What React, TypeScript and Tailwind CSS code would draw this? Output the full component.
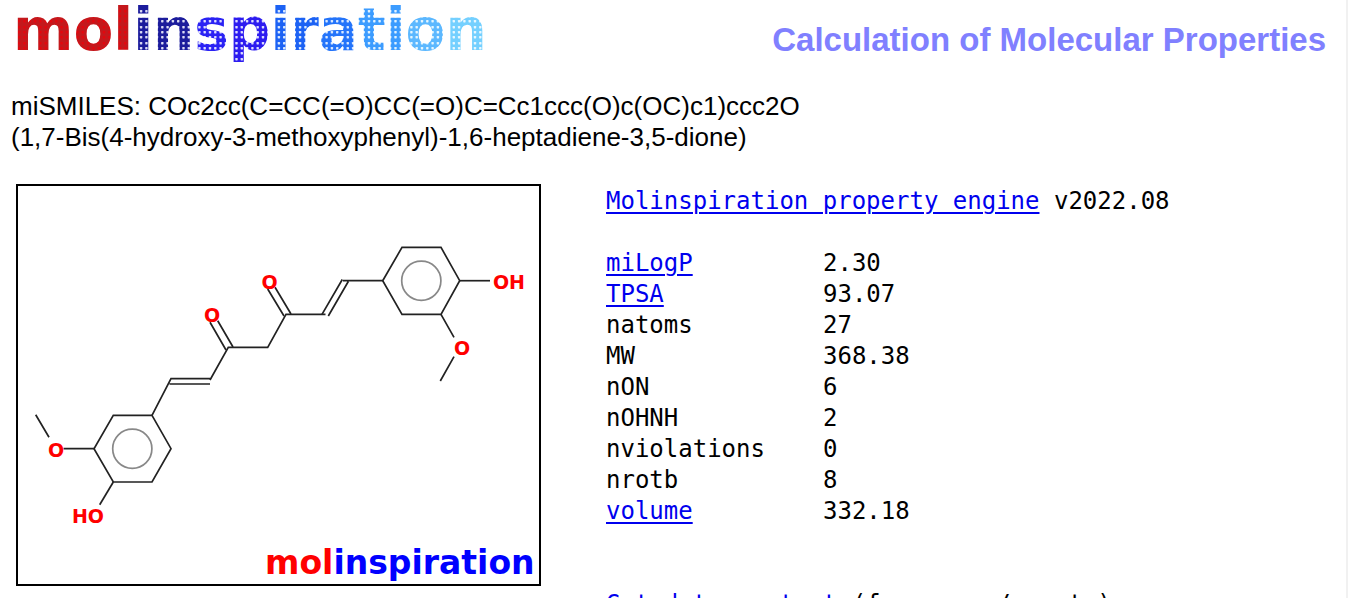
type Property = {
  name: string
  value: string
  href?: string
}

const PROPERTIES: Property[] = [
  { name: "miLogP", value: "2.30", href: "#logp" },
  { name: "TPSA", value: "93.07", href: "#tpsa" },
  { name: "natoms", value: "27" },
  { name: "MW", value: "368.38" },
  { name: "nON", value: "6" },
  { name: "nOHNH", value: "2" },
  { name: "nviolations", value: "0" },
  { name: "nrotb", value: "8" },
  { name: "volume", value: "332.18", href: "#volume" },
]

const LINK = "text-[#0000ee] underline decoration-2 underline-offset-3"

// Colour bands of the header wordmark, left to right
const LOGO_BANDS = [
  { x: 0, width: 116, color: "#c4181c", dot: "#e4060e" },
  { x: 116, width: 60, color: "#1c1c9c", dot: "#dcdcf4" },
  { x: 176, width: 38, color: "#2a22f4", dot: "#dcdcff" },
  { x: 214, width: 41, color: "#2d1cf0", dot: "#dcdcff" },
  { x: 255, width: 47, color: "#1c62f4", dot: "#d8e8ff" },
  { x: 302, width: 39, color: "#2474fa", dot: "#d8e8ff" },
  { x: 341, width: 47, color: "#3c9cff", dot: "#e0f2ff" },
  { x: 388, width: 42, color: "#5cb8ff", dot: "#e4f6ff" },
  { x: 430, width: 50, color: "#74d0ff", dot: "#e8f8ff" },
]

const DOT_ROWS = [2, 7, 12, 18, 23, 28, 34, 39, 44, 50]
const DOT_COLUMNS = Array.from({ length: 90 }, (_, i) => 2 + i * 5.3)

function bandAt(x: number) {
  return LOGO_BANDS.find((band) => x < band.x + band.width) ?? LOGO_BANDS[0]
}

function Logo() {
  return (
    <svg
      viewBox="0 0 471 52"
      className="h-[52px] w-[471px] overflow-visible font-['DejaVu_Sans'] text-[58px] font-bold"
      role="img"
      aria-label="molinspiration"
    >
      <defs>
        {/* Starts left of the origin so the first letter is not cut */}
        <pattern id="dotted" width="490" height="64" x="-4" patternUnits="userSpaceOnUse">
          <g transform="translate(4 0)">
            <rect x="-4" width="4" height="64" fill={LOGO_BANDS[0].color} />
            {LOGO_BANDS.map((band) => (
              <rect key={band.x} x={band.x} width={band.width} height="64" fill={band.color} />
            ))}
            {DOT_ROWS.map((y) =>
              DOT_COLUMNS.map((x) => (
                <rect key={`${x}-${y}`} x={x} y={y} width="2.4" height="2.4" rx="0.6" fill={bandAt(x).dot} />
              )),
            )}
          </g>
        </pattern>
      </defs>
      <text x="-3" y="42" fill="url(#dotted)">
        molinspiration
      </text>
    </svg>
  )
}

function Molecule() {
  return (
    <svg
      viewBox="18 186 521 398"
      className="h-[402px] w-[525px] shrink-0 border-2 border-black font-['DejaVu_Sans'] text-[19px] font-bold"
      role="img"
      aria-label="Curcumin structure"
    >
      <g fill="none" stroke="#222" strokeWidth="1.7">
        {/* Right ring */}
        <path d="M382.7 280.7 402 247.4H441L459.7 280.7 441 314.4H402Z" />
        <path d="M459.7 280.7H490" />
        <path d="M441 314.4 454 337.3M454 356.7 440.3 381" />

        {/* Chain */}
        <path d="M382.7 280.7H343M342.3 279.5 322 314.4M348.3 281.5 328.3 316" />
        <path d="M325.5 314.4H286L267.7 347.4H228.3L210 380" />
        <path d="M267.7 289 284 316M275 287.3 291 314" />
        <path d="M210 322.3 226 350M217.7 320.7 233 347" />
        <path d="M210 378.7H171L152 415.4M169.5 384H210" />

        {/* Left ring */}
        <path d="M152 415.4 171 448.7 152 482H113.3L94 448.7 113.3 415.4Z" />
        <path d="M94 448.7H63.5M49 437.3 35.7 414.7" />
        <path d="M113.3 482 99.7 504.7" />
      </g>
      <g fill="none" stroke="#888" strokeWidth="1.7">
        <circle cx="421.3" cy="280.7" r="19.6" />
        <circle cx="132.3" cy="448.7" r="19.6" />
      </g>
      <g fill="#ff0000" textAnchor="middle">
        <text x="269.5" y="289">O</text>
        <text x="212" y="322">O</text>
        <text x="509" y="289">OH</text>
        <text x="462" y="355">O</text>
        <text x="56" y="457">O</text>
        <text x="88" y="523">HO</text>
      </g>
      <text x="265" y="574" className="text-[33px]">
        <tspan fill="#ff0000">mol</tspan>
        <tspan fill="#0000ff">inspiration</tspan>
      </text>
    </svg>
  )
}

export default function App() {
  return (
    <div className="min-h-screen overflow-hidden border-r-2 border-[#f1f1f1] bg-white font-['Liberation_Sans',Arial,sans-serif] text-black">
      <header className="flex items-start justify-between pt-2 pr-5 pl-4">
        <Logo />
        <h1 className="pt-3 text-[33px] leading-10 font-bold text-[#8080ff]">
          Calculation of Molecular Properties
        </h1>
      </header>

      <p className="mt-[31px] px-[11px] text-[26px] leading-[31px]">
        miSMILES: COc2cc(C=CC(=O)CC(=O)C=Cc1ccc(O)c(OC)c1)ccc2O
        <br />
        (1,7-Bis(4-hydroxy-3-methoxyphenyl)-1,6-heptadiene-3,5-dione)
      </p>

      <main className="mt-[31px] flex items-start gap-[65px] px-4">
        <Molecule />
        <div className="pt-0.5 font-['DejaVu_Sans_Mono',monospace] text-2xl leading-[31px] whitespace-nowrap">
          <p>
            <a href="#engine" className={LINK}>
              Molinspiration property engine
            </a>{" "}
            v2022.08
          </p>
          <table className="mt-[31px]">
            <tbody>
              {PROPERTIES.map((property) => (
                <tr key={property.name}>
                  <th scope="row" className="w-[217px] p-0 text-left font-normal">
                    {property.href ? (
                      <a href={property.href} className={LINK}>
                        {property.name}
                      </a>
                    ) : (
                      property.name
                    )}
                  </th>
                  <td className="p-0">{property.value}</td>
                </tr>
              ))}
            </tbody>
          </table>
          <p className="mt-[62px]">
            <a href="#text" className={LINK}>
              Get data as text
            </a>{" "}
            (for copy / paste)
          </p>
        </div>
      </main>
    </div>
  )
}
